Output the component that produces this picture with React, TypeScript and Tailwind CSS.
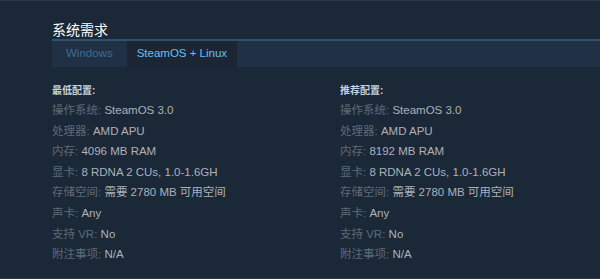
const minReq = [
  ["操作系统:", "SteamOS 3.0"],
  ["处理器:", "AMD APU"],
  ["内存:", "4096 MB RAM"],
  ["显卡:", "8 RDNA 2 CUs, 1.0-1.6GH"],
  ["存储空间:", "需要 2780 MB 可用空间"],
  ["声卡:", "Any"],
  ["支持 VR:", "No"],
  ["附注事项:", "N/A"],
];

const recReq = [
  ["操作系统:", "SteamOS 3.0"],
  ["处理器:", "AMD APU"],
  ["内存:", "8192 MB RAM"],
  ["显卡:", "8 RDNA 2 CUs, 1.0-1.6GH"],
  ["存储空间:", "需要 2780 MB 可用空间"],
  ["声卡:", "Any"],
  ["支持 VR:", "No"],
  ["附注事项:", "N/A"],
];

function ReqColumn({ title, rows }: { title: string; rows: string[][] }) {
  return (
    <div className="flex flex-col">
      <div className="text-[10px] font-bold leading-[14px] text-[#c6d4df]">{title}</div>
      <ul className="mt-[2px] flex flex-col">
        {rows.map(([label, value]) => (
          <li key={label} className="text-[11.5px] leading-[20.6px] whitespace-nowrap">
            <span className="text-[#5f6b77]">{label}</span>{" "}
            <span className="text-[#acb2b8]">{value}</span>
          </li>
        ))}
      </ul>
    </div>
  );
}

export default function App() {
  return (
    <div
      className="w-[600px] h-[279px] overflow-hidden bg-[#1b2838] border-t border-b border-[#2a3949]"
      style={{ fontFamily: '"Liberation Sans", Arial, "Noto Sans CJK SC", sans-serif' }}
    >
      <div className="pl-[52px] pt-[20px]">
        <h2 className="text-[14px] leading-[18px] text-white font-normal">系统需求</h2>
        <div className="flex h-[28px] border-t-2 border-[#2f5170] bg-[#203145]">
          <div className="flex items-center px-[14px] text-[11.5px] text-[#3d6d91]">Windows</div>
          <div className="flex items-center px-[10px] bg-[#1b2534] text-[11.5px] text-[#67c1f5]">
            SteamOS + Linux
          </div>
        </div>
        <div className="mt-[17px] grid grid-cols-[288px_1fr]">
          <ReqColumn title="最低配置:" rows={minReq} />
          <ReqColumn title="推荐配置:" rows={recReq} />
        </div>
      </div>
    </div>
  );
}
